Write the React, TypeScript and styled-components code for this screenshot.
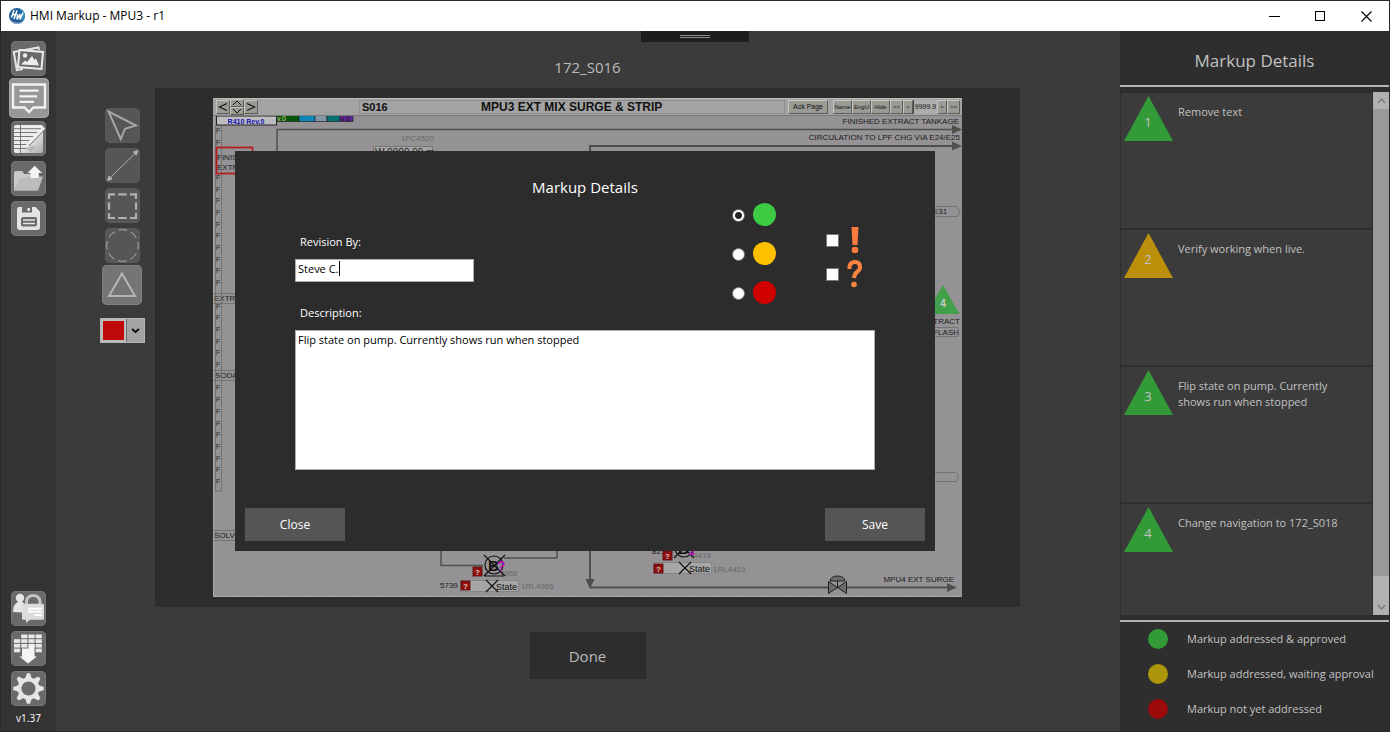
import React, { useState } from "react";
import styled, { createGlobalStyle, css } from "styled-components";

const Global = createGlobalStyle`
  * { box-sizing: border-box; }
  body { margin: 0; background: #2b2b2b; }
  body, button, input, textarea { font-family: "Open Sans", "Noto Sans", sans-serif; font-size: 11px; }
  button { border: 0; padding: 0; cursor: pointer; }
  h1, h2, p, ul { margin: 0; padding: 0; font-weight: 400; }
`;

const Window = styled.div`
  display: grid;
  grid-template-rows: 30px minmax(0, 1fr);
  height: 100vh;
  min-height: 700px;
  border: 1px solid #2b282c;
  background: #3b3b3b;
`;

const TitleBar = styled.header`
  display: flex;
  align-items: center;
  gap: 5px;
  padding-left: 8px;
  background: #fff;
  color: #000;
`;

const WindowTitle = styled.h1`
  flex: 1;
  font-size: 12px;
  line-height: 16px;
`;

const WindowButtons = styled.div`
  display: flex;
`;

const WindowButton = styled.button`
  display: grid;
  place-items: center;
  width: 46px;
  height: 30px;
  background: transparent;
`;

const Workspace = styled.div`
  display: grid;
  grid-template-columns: 55px minmax(0, 1fr) 269px;
  min-height: 0;
`;

const Sidebar = styled.nav`
  display: flex;
  flex-direction: column;
  align-items: center;
  padding: 7px 0 5px;
  background: #333;
`;

const Spacer = styled.div`
  flex: 1;
`;

const Version = styled.p`
  color: #fff;
  font-size: 10px;
  line-height: 16px;
  padding-top: 2px;
`;

const IconCell = styled.div`
  display: grid;
  place-items: center;
  width: 40px;
  height: 40px;
`;

const IconButton = styled.button<{ $active?: boolean; $tool?: boolean }>`
  display: grid;
  place-items: center;
  width: ${(p) => (p.$active ? 40 : 35)}px;
  height: ${(p) => (p.$active ? 40 : 35)}px;
  border-radius: 5px;
  background: ${(p) => (p.$tool ? "#565656" : "#6a6a6a")};
  box-shadow: inset 0 0 0 1px ${(p) => (p.$tool ? "#5a5a5a" : "#757575")};
  ${(p) =>
    p.$active &&
    css`
      background: ${p.$tool ? "#747474" : "#979797"};
      box-shadow: inset 0 0 0 1px ${p.$tool ? "#808080" : "#a6a6a6"};
    `}
  svg { display: block; }
`;

const Main = styled.main`
  position: relative;
  display: grid;
  grid-template-columns: 99px minmax(0, 1fr) 100px;
`;

const Tools = styled.div`
  display: flex;
  flex-direction: column;
  align-items: center;
  padding: 74px 0 0 33px;
`;

const ColourPicker = styled.button`
  display: flex;
  width: 45px;
  height: 25px;
  margin-top: 13px;
  border: 1px solid #b5b5b5;
  background: #a3a3a3;
`;

const Swatch = styled.span`
  width: 25px;
  height: 23px;
  border: 2px solid #bdbdbd;
  background: #bf0808;
`;

const SwatchArrow = styled.span`
  display: grid;
  place-items: center;
  flex: 1;
  height: 23px;
  border-left: 1px solid #6c6c6c;
`;

const Stage = styled.section`
  display: flex;
  flex-direction: column;
  align-items: center;
  padding-bottom: 52px;
`;

const StageTitle = styled.h2`
  padding: 26px 0 10px;
  color: #bababa;
  font-size: 15px;
  line-height: 21px;
`;

const Canvas = styled.div`
  display: flex;
  justify-content: center;
  align-self: stretch;
  flex: 1;
  min-height: 0;
  padding: 10px;
  background: #2d2d2d;
`;

const DoneButton = styled.button`
  width: 116px;
  height: 47px;
  margin-top: 25px;
  background: #2d2d2d;
  color: #bababa;
  font-size: 15px;
`;

const Screen = styled.div`
  display: flex;
  flex-direction: column;
  width: 100%;
  max-width: 749px;
  background: #949294;
`;

const ScreenBar = styled.div`
  display: flex;
  align-items: center;
  height: 18px;
  padding: 0 2px 0 3px;
  border-top: 1px solid #bbb;
  border-bottom: 1px solid #7a7a7a;
  background: #a3a3a3;
  color: #111;
  font-family: "Liberation Sans", sans-serif;
`;

const ScreenHeading = styled.div`
  display: flex;
  flex: 1;
  align-items: center;
  height: 14px;
  margin: 0 3px 0 101px;
  padding-left: 2px;
  border: 1px solid #8f8f8f;
  font-size: 12px;
  font-weight: 700;
  line-height: 12px;
  white-space: nowrap;
`;

const ScreenCode = styled.span`
  width: 119px;
  font-size: 11px;
`;

const Bevel = styled.button<{ $w: number }>`
  flex: none;
  width: ${(p) => p.$w}px;
  height: 14px;
  border: 1px solid;
  border-color: #c4c4c0 #5c5c58 #5c5c58 #c4c4c0;
  background: #9b9b95;
  color: #111;
  font-family: "Liberation Sans", sans-serif;
  font-size: ${(p) => (p.$w > 20 ? 7 : 6)}px;
  line-height: 12px;
  white-space: nowrap;
  svg { display: block; margin: 0 auto; }
`;

const NavPair = styled.div`
  display: flex;
  flex-direction: column;
  ${Bevel} { height: 8px; }
`;

const BarGroup = styled.div`
  display: flex;
  margin-left: 5px;
`;

const Reading = styled.output`
  flex: none;
  width: 24px;
  height: 14px;
  border-left: 1px solid #444;
  background: #adadad;
  font-size: 7px;
  line-height: 14px;
  text-align: center;
`;

const Schematic = styled.svg`
  display: block;
  width: 100%;
  flex: 1;
  min-height: 0;
  font-family: "Liberation Sans", sans-serif;
  font-size: 8px;
`;

const DialogLayer = styled.div`
  position: absolute;
  inset: 0 6px 60px 0;
  display: grid;
  place-items: center;
`;

const Dialog = styled.form`
  display: flex;
  flex-direction: column;
  width: 700px;
  height: 400px;
  padding: 26px 10px 10px;
  background: #2c2c2c;
  color: #fff;
`;

const DialogTitle = styled.h2`
  font-size: 15px;
  line-height: 20px;
  text-align: center;
`;

const DialogBody = styled.div`
  flex: 1;
  padding: 6px 50px 0;
`;

const TopRow = styled.div`
  display: flex;
  height: 102px;
`;

const Field = styled.div`
  display: flex;
  flex-direction: column;
  gap: 9px;
  flex: 1;
`;

const AuthorField = styled(Field)`
  padding-top: 31px;
`;

const FieldLabel = styled.label`
  padding-left: 5px;
  line-height: 16px;
`;

const InputWrap = styled.div`
  position: relative;
  width: 179px;
`;

const boxed = css`
  display: block;
  width: 100%;
  margin: 0;
  border: 1px solid #abadb3;
  border-radius: 0;
  background: #fff;
  color: #000;
  outline: 0;
  line-height: 16px;
`;

const TextInput = styled.input`
  ${boxed}
  height: 23px;
  padding: 0 2px 4px;
  caret-color: transparent;
`;

const Caret = styled.span`
  position: absolute;
  left: 44px;
  top: 2px;
  width: 1px;
  height: 15px;
  background: #000;
`;

const TextArea = styled.textarea`
  ${boxed}
  height: 140px;
  padding: 1px 2px;
  resize: none;
`;

const StatusGroup = styled.div`
  display: flex;
  flex-direction: column;
  gap: 16px;
  margin-right: 50px;
`;

const Choice = styled.label`
  display: flex;
  align-items: center;
  gap: 8px;
`;

const Radio = styled.input`
  appearance: none;
  width: 13px;
  height: 13px;
  margin: 1px 0 0;
  border: 1px solid #777;
  border-radius: 50%;
  background: #fff;
  &:checked { background: radial-gradient(circle, #222 0 3px, #fff 4px); }
`;

const Dot = styled.span<{ $size: number; $colour: string }>`
  width: ${(p) => p.$size}px;
  height: ${(p) => p.$size}px;
  flex: none;
  border-radius: 50%;
  background: ${(p) => p.$colour};
`;

const FlagGroup = styled.div`
  display: flex;
  flex-direction: column;
  gap: 6px;
  padding: 23px 12px 0 0;
`;

const Tick = styled.input`
  appearance: none;
  width: 13px;
  height: 13px;
  margin: 0;
  border: 1px solid #777;
  background: #fff;
  &:checked { background: #333; }
`;

const Footer = styled.div`
  display: flex;
  justify-content: space-between;
`;

const DialogButton = styled.button`
  width: 100px;
  height: 33px;
  background: #555;
  color: #fff;
  font-size: 12px;
`;

const Details = styled.aside`
  display: flex;
  flex-direction: column;
  min-height: 0;
  background: #2e2e2e;
  color: #c2c2c2;
`;

const DetailsTitle = styled.h2`
  height: 56px;
  padding-top: 2px;
  border-bottom: 2px solid #b3b3b3;
  font-size: 17px;
  line-height: 56px;
  text-align: center;
`;

const ListArea = styled.div`
  display: flex;
  flex: 1;
  min-height: 0;
  margin: 5px 0;
`;

const List = styled.ul`
  flex: 1;
  overflow: hidden;
  padding: 1px 1px 0;
  list-style: none;
`;

const Item = styled.li`
  display: flex;
  gap: 5px;
  height: 135px;
  margin-bottom: 2px;
  padding: 3px;
  background: #3b3b3b;
`;

const ItemText = styled.p`
  padding-top: 8px;
  line-height: 16px;
  max-width: 172px;
`;

const Badge = styled.svg`
  flex: none;
  font-size: 13px;
`;

const ScrollBar = styled.div`
  display: flex;
  flex-direction: column;
  justify-content: space-between;
  width: 16px;
  background: #b1b1b1;
`;

const ScrollButton = styled.button`
  display: grid;
  place-items: center;
  height: 17px;
  background: #b1b1b1;
`;

const Thumb = styled.div`
  flex: 0 1 467px;
  margin-bottom: auto;
  background: #999;
`;

const Legend = styled.ul`
  display: flex;
  flex-direction: column;
  gap: 15px;
  padding: 7px 0 12px 28px;
  border-top: 2px solid #b3b3b3;
  list-style: none;
`;

const LegendRow = styled.li`
  display: flex;
  align-items: center;
  gap: 19px;
  height: 20px;
  line-height: 16px;
  white-space: nowrap;
`;

const TabHandle = styled.div`
  position: absolute;
  top: 0;
  left: calc(50% + 53px);
  display: grid;
  place-items: center;
  width: 108px;
  height: 11px;
  background: #1d1d1d;
`;

const Grip = styled.span`
  width: 30px;
  height: 3px;
  border: solid #8a8a8a;
  border-width: 1px 0;
`;

const Logo = () => (
  <svg width="16" height="16" viewBox="0 0 16 16" fill="none" aria-hidden="true">
    <circle cx="8" cy="8" r="8" fill="#1f5c96" />
    <path d="M9 0a8 8 0 0 1 6.500 10L12 14l2-9z" fill="#2d93c4" />
    <path d="M1 11q5 6 12 2.500l-1 1.300Q7 17.500 2.500 13.500z" fill="#a9b6d2" />
    <path d="M5 2L2.500 9.500M8 2.500L5 11M3.800 7q2-1 3.200.5M8.500 6L8 11.500 11 6v5.500L14 4.500" stroke="#fff" strokeWidth="1.500" />
  </svg>
);

const Svg = ({ size = 35, children }: { size?: number; children: React.ReactNode }) => (
  <svg width={size} height={size} viewBox={`0 0 ${size} ${size}`} fill="none" aria-hidden="true">{children}</svg>
);

const PhotosIcon = () => (
  <Svg>
    <path d="M28 9l-.5-2.500L2.800 11l3 18 6-1" stroke="#e6e6e6" strokeWidth="2" />
    <path d="M8.500 9l23.500 2-1.500 17-23.500-2z" fill="#6a6a6a" stroke="#ececec" strokeWidth="2" />
    <circle cx="14" cy="14.500" r="2.200" fill="#ececec" />
    <path d="M10 23.500l4-4 2 1.500 5-6 2.500 4 1.500-1.500 3 7z" fill="#ececec" />
  </Svg>
);
const CommentIcon = () => (
  <Svg size={40}>
    <path d="M4 6.500h32v23H24.500L20 34l-4.500-4.500H4z" stroke="#f2f2f2" strokeWidth="2.400" />
    <path d="M10.500 12.700h19M10.500 18.300h17.500M10.500 23.800h14.500" stroke="#f2f2f2" strokeWidth="2.200" />
  </Svg>
);
const NotesIcon = () => (
  <Svg>
    <defs>
      <linearGradient id="paper" x1="0" y1="0" x2="1" y2="1">
        <stop offset=".5" stopColor="#ececec" /><stop offset="1" stopColor="#aaa" />
      </linearGradient>
    </defs>
    <rect x="3" y="4" width="29" height="28" rx="2" fill="url(#paper)" />
    <path d="M3 7.700h29M3 11.500h27M3 15.500h24M3 19.500h20M3 23.500h16M3 27.500h12M9.500 4v28" stroke="#777" strokeWidth="1" />
    <path d="M17 24l15-15.500" stroke="#888" strokeWidth="3.600" />
    <path d="M16.500 23.500L33 6.500" stroke="#f1f1f1" strokeWidth="3" />
    <path d="M14 26.500l1.500-4 2.500 2.500z" fill="#f1f1f1" />
    <path d="M14 27l6 4 5-6" fill="#999" opacity=".5" />
  </Svg>
);
const FolderIcon = () => (
  <Svg>
    <path d="M3 29.500V12q0-2 2-2h6l2.500 3H28v4H11z" fill="#c9c9c9" />
    <path d="M3 29.700L9.500 17H16l2.500-1.500H32L27 29.700z" fill="#bcbcbc" />
    <path d="M23.700 4.700L31 12h-3.500v5h-8v-5h-3z" fill="#f4f4f4" />
  </Svg>
);
const SaveIcon = () => (
  <Svg>
    <path d="M8 6h3v5.500h10V6h3.500L29 10.500V26q0 3-3 3H9q-3 0-3-3V8q0-2 2-2z" fill="#e4e4e4" />
    <path d="M16.500 7h2.500v3h-2.500z" fill="#e4e4e4" />
    <rect x="10" y="16" width="16" height="9.500" rx="2" fill="#6a6a6a" />
    <path d="M12 19h12M12 22.500h12" stroke="#e4e4e4" strokeWidth="1.500" />
  </Svg>
);
const UserLockIcon = () => (
  <Svg>
    <circle cx="9" cy="7" r="4.200" fill="#e6e6e6" />
    <path d="M2 21q0-8 5-10h4q3 1 3 3l-3 2v5.500z" fill="#e6e6e6" />
    <path d="M15.500 14V10q1-5.500 6.700-5.500T29 10v4" stroke="#c4c4c4" strokeWidth="3" />
    <path d="M12.500 12.700h19q1.500 0 1.500 1.500v13q0 1.500-1.500 1.500H19L15 32v-3.300h-2.500q-1.500 0-1.500-1.500v-13q0-1.500 1.500-1.500z" fill="#dcdcdc" />
    <path d="M17 17.700h14M17 20.700h14M23 24.200h8" stroke="#fff" strokeWidth="1.800" />
  </Svg>
);
const gridCells = [[1, 0], [2, 0], [3, 0], [0, 1], [1, 1], [2, 1], [3, 1], [0, 2], [1, 2], [2, 2], [3, 2], [0, 3], [3, 3]];
const GridArrowIcon = () => (
  <Svg>
    {gridCells.map(([c, r]) => (
      <rect key={`${c}-${r}`} x={3 + c * 7.2} y={3.5 + r * 4.7} width="6.200" height="3.700" fill="#e8e8e8" />
    ))}
    <path d="M11 17.500h6.500l.5-4h5.500v12H26l-9 7-8.500-7H11z" fill="#f4f4f4" />
  </Svg>
);
const GearIcon = () => (
  <Svg>
    {[0, 45, 90, 135, 180, 225, 270, 315].map((a) => (
      <path key={a} d="M14 8l2-5.800h3L21 8z" fill="#e6e6e6" transform={`rotate(${a} 17.500 17.500)`} />
    ))}
    <circle cx="17.500" cy="17.500" r="9" stroke="#e6e6e6" strokeWidth="3.800" />
  </Svg>
);

const CursorIcon = () => (
  <Svg><path d="M3.500 3.500L31 17.500l-11 3.200-4.200 10.500z" stroke="#a5a5a5" strokeWidth="2" /></Svg>
);
const LineIcon = () => (
  <Svg>
    <path d="M4.500 30.500L31 4.500" stroke="#b0b0b0" />
    <path d="M2.500 32.500l1.500-4.500 3.200 3zM33 2.500l-4.700 1.500 3 3.200z" fill="#b0b0b0" stroke="#b0b0b0" />
  </Svg>
);
const DashedBoxIcon = () => (
  <Svg>
    <path d="M4 11V6.300h6M13.300 6.300h8.400M25 6.300h6V11M31 14.300v7.400M31 25v5h-6M21.700 30h-8.400M10 30H4v-5M4 21.700v-7.400" stroke="#b0b0b0" strokeWidth="2.200" />
  </Svg>
);
const DashedCircleIcon = () => (
  <Svg><circle cx="17.500" cy="17.500" r="15.800" stroke="#b0b0b0" strokeDasharray="8.400 4" strokeDashoffset="4.200" /></Svg>
);
const TriangleIcon = () => (
  <Svg size={40}><path d="M20 8.500L33 31H7z" stroke="#b5b5b5" strokeWidth="2" /></Svg>
);

const TriangleBadge = ({ n, colour }: { n: number; colour: string }) => (
  <Badge width="49" height="45" viewBox="0 0 49 45">
    <path d="M24.500 0L49 45H0z" fill={colour} />
    <text x="24" y="31" textAnchor="middle" fill="#c2c2c2">{n}</text>
  </Badge>
);

const navItems = [
  { label: "Graphics", icon: <PhotosIcon /> },
  { label: "Markups", icon: <CommentIcon />, active: true },
  { label: "Notes", icon: <NotesIcon /> },
  { label: "Open", icon: <FolderIcon /> },
  { label: "Save project", icon: <SaveIcon /> },
];
const adminItems = [
  { label: "Permissions", icon: <UserLockIcon /> },
  { label: "Export", icon: <GridArrowIcon /> },
  { label: "Settings", icon: <GearIcon /> },
];
const toolItems = [
  { label: "Arrow", icon: <CursorIcon /> },
  { label: "Line", icon: <LineIcon /> },
  { label: "Rectangle", icon: <DashedBoxIcon /> },
  { label: "Ellipse", icon: <DashedCircleIcon /> },
  { label: "Triangle", icon: <TriangleIcon />, active: true },
];
const markups = [
  { n: 1, colour: "#339a38", text: "Remove text" },
  { n: 2, colour: "#bd900b", text: "Verify working when live." },
  { n: 3, colour: "#339a38", text: "Flip state on pump. Currently shows run when stopped" },
  { n: 4, colour: "#339a38", text: "Change navigation to 172_S018" },
];
const legend = [
  { colour: "#339a38", text: "Markup addressed & approved" },
  { colour: "#ac960b", text: "Markup addressed, waiting approval" },
  { colour: "#9d0a0a", text: "Markup not yet addressed" },
];
const statuses = [
  { name: "Approved", colour: "#3ecb44" },
  { name: "Waiting", colour: "#ffc000" },
  { name: "Open", colour: "#d00000" },
];

type ButtonSpec = { label: string; icon: React.ReactNode; active?: boolean };
const IconList = ({ items, tool }: { items: ButtonSpec[]; tool?: boolean }) => (
  <>
    {items.map((i) => (
      <IconCell key={i.label}>
        <IconButton type="button" aria-label={i.label} $active={i.active} $tool={tool}>{i.icon}</IconButton>
      </IconCell>
    ))}
  </>
);

const Alarm = ({ x, y }: { x: number; y: number }) => (
  <g>
    <rect x={x} y={y} width="9" height="9" fill="#8e0f0f" stroke="#5a0808" strokeWidth=".8" />
    <text x={x + 4.5} y={y + 7.5} textAnchor="middle" fill="#e0c0c0" fontWeight="700">?</text>
  </g>
);

// Flow direction letters down the left pipe, leaving room for the stream labels.
const labelRows = [160, 170, 301, 378];
const flowMarks = Array.from({ length: 31 }, (_, i) => Math.round(133 + i * 11.7)).filter((y) =>
  labelRows.every((row) => Math.abs(row - y) > 6)
);

const ProcessDrawing = () => (
  <Schematic viewBox="213 116 749 481" preserveAspectRatio="none">
    <rect x="213" y="116" width="749" height="481" fill="#949294" />
    <path d="M213.500 116v481" stroke="#aaa" />
    <path d="M214 596.500h748" stroke="#bbb" strokeDasharray="2 1" />
    <rect x="216.500" y="116" width="60" height="9" fill="#bdbdc0" stroke="#222" strokeWidth="1" />
    <text x="246" y="124" textAnchor="middle" fill="#1515b5" fontSize="7" fontWeight="700">R410 Rev.0</text>
    <g stroke="#222" strokeWidth=".7">
      <rect x="277" y="115.500" width="22" height="6" fill="#075507" />
      <rect x="299" y="115.500" width="16" height="6" fill="#0c87bb" />
      <rect x="315" y="115.500" width="12" height="6" fill="#8497ab" />
      <rect x="327" y="115.500" width="13" height="6" fill="#077070" />
      <rect x="340" y="115.500" width="13" height="6" fill="#64269a" />
    </g>
    <text x="277" y="121" fill="#d5d5a0" fontSize="7">v.0</text>
    <text x="341" y="121" fill="#111" fontSize="7">v.0</text>
    <g stroke="#4c514c" strokeWidth="1.500" fill="none">
      <path d="M277 160v-30.500h676" />
      <path d="M590 583v-437h363" strokeWidth="2" />
      <path d="M441 545v20.500h42M504 558h53v-14" />
      <path d="M590 587.500h360" strokeWidth="2" />
    </g>
    <path d="M952 125l10 4.500-10 4.500zM952 141.500l10 4.500-10 4.500zM947 583l10 4.500-10 4.500zM585.500 579h9l-4.500 10z" fill="#4c514c" />
    <g fill="#1c1c1c">
      <g textAnchor="end">
        <text x="959" y="124">FINISHED EXTRACT TANKAGE</text>
        <text x="960" y="140">CIRCULATION TO LPF CHG VIA E24/E25</text>
        <text x="954" y="582">MPU4 EXT SURGE</text>
        <text x="960" y="324">EXTRACT</text>
        <text x="959" y="335">FLASH</text>
      </g>
      <text x="440" y="588">5739</text>
      <text x="652" y="554">821</text>
      <text x="933" y="214">E31</text>
      <text x="217" y="160">FINISHED</text>
      <text x="217" y="170">EXTRACT</text>
      <text x="214" y="301">EXTRACT</text>
      <text x="215" y="378">SODA</text>
      <text x="214" y="538">SOLVENT</text>
    </g>
    <g fill="#686868">
      <text x="401" y="141">1FC4520</text>
      <text x="521" y="589">1RL4966</text>
      <text x="500" y="576">4966</text>
      <text x="693" y="558">4419</text>
      <text x="713" y="572">1RL4419</text>
    </g>
    <rect x="373.500" y="146.500" width="59" height="14" fill="#a4a4a4" stroke="#777" />
    <text x="375" y="156" fill="#222" fontSize="10">W 9999.99 m</text>
    <g fill="none" stroke="#6c6c6c" strokeWidth=".8">
      <path d="M215.500 126v365h6V126M213 293.500h25M213 303.500h25M213 370.500h25M213 380.500h25M213 530.500h25M213 540.500h25" />
      <path d="M930 206.500h27l3 5-3 5h-27M930 472.500h26q2 0 2 4.500t-2 4.500h-26M930 327.500h28v9h-28" />
    </g>
    <g fill="#222" fontSize="7">
      {flowMarks.map((y) => <text key={y} x="216" y={y}>F</text>)}
    </g>
    <rect x="216.500" y="147.500" width="36" height="26" fill="none" stroke="#b31d1d" strokeWidth="1.800" />
    <path d="M943 285l16.500 29H926z" fill="#41a049" />
    <text x="943" y="307" textAnchor="middle" fill="#ccc" fontSize="10" fontWeight="700">4</text>
    <Alarm x={473} y={567} />
    <Alarm x={663} y={551} />
    <rect x="460.500" y="580.500" width="58" height="11" fill="#a6a6a6" stroke="#858585" />
    <rect x="653.500" y="562.500" width="58" height="11" fill="#a6a6a6" stroke="#858585" />
    <Alarm x={461} y={581} />
    <Alarm x={654} y={564} />
    <g fill="none" stroke="#111" strokeWidth="1.200">
      <circle cx="494" cy="565" r="9" /><path d="M484 555l21 21M505 555l-21 21M484 576h20" />
      <circle cx="684" cy="548" r="9" /><path d="M674 538l20 20M694 538l-20 20" />
      <path d="M486 580l12 12M498 580l-12 12M679 562l12 12M691 562l-12 12" />
    </g>
    <text x="488" y="571" fontSize="15" fontWeight="700" fill="#111">B</text>
    <text x="678" y="554" fontSize="15" fontWeight="700" fill="#111">B</text>
    <text x="497" y="571" fontSize="14" fontWeight="700" fill="#b515b5">?</text>
    <path d="M689 554h4v-4" stroke="#b515b5" strokeWidth="2" fill="none" />
    <text x="496" y="590" fontSize="9" fill="#111">State</text>
    <text x="689" y="572" fontSize="9" fill="#111">State</text>
    <g fill="#6b6b6f" stroke="#222">
      <path d="M830 581q1-5 7.500-5t7.500 5z" /><path d="M828.500 581.500v12l9-6 9 6v-12l-9 6zM837.500 581v7" />
    </g>
  </Schematic>
);

const Chevron = ({ d }: { d: string }) => (
  <svg width="10" height="10" viewBox="0 0 10 10" fill="none"><path d={d} stroke="#111" strokeWidth="1.200" /></svg>
);

export default function App() {
  const [author, setAuthor] = useState("Steve C.");
  const [status, setStatus] = useState("Approved");
  const [description, setDescription] = useState("Flip state on pump. Currently shows run when stopped");

  return (
    <Window>
      <Global />
      <TitleBar>
        <Logo />
        <WindowTitle>HMI Markup - MPU3 - r1</WindowTitle>
        <WindowButtons>
          <WindowButton aria-label="Minimize"><svg width="11" height="11"><path d="M0 5.500h11" stroke="#000" /></svg></WindowButton>
          <WindowButton aria-label="Maximize"><svg width="11" height="11"><rect x=".5" y=".5" width="9" height="9" fill="none" stroke="#000" /></svg></WindowButton>
          <WindowButton aria-label="Close window"><svg width="11" height="11"><path d="M.5.5l10 10M10.500.5l-10 10" stroke="#000" strokeWidth="1.100" /></svg></WindowButton>
        </WindowButtons>
      </TitleBar>
      <Workspace>
        <Sidebar>
          <IconList items={navItems} />
          <Spacer />
          <IconList items={adminItems} />
          <Version>v1.37</Version>
        </Sidebar>
        <Main>
          <Tools>
            <IconList items={toolItems} tool />
            <ColourPicker type="button" aria-label="Markup colour">
              <Swatch />
              <SwatchArrow><svg width="9" height="6"><path d="M1 1l3.500 3L8 1" stroke="#111" strokeWidth="2" fill="none" /></svg></SwatchArrow>
            </ColourPicker>
          </Tools>
          <Stage>
            <StageTitle>172_S016</StageTitle>
            <Canvas>
              <Screen>
                <ScreenBar>
                  <Bevel $w={14} aria-label="Previous"><Chevron d="M9 1.500L1.500 5 9 8.500" /></Bevel>
                  <NavPair>
                    <Bevel $w={14} aria-label="Up"><svg width="10" height="6"><path d="M1 5l4-4 4 4" stroke="#111" fill="none" /></svg></Bevel>
                    <Bevel $w={14} aria-label="Down"><svg width="10" height="6"><path d="M1 1l4 4 4-4" stroke="#111" fill="none" /></svg></Bevel>
                  </NavPair>
                  <Bevel $w={14} aria-label="Next"><Chevron d="M1 1.500L8.500 5 1 8.500" /></Bevel>
                  <ScreenHeading><ScreenCode>S016</ScreenCode>MPU3 EXT MIX SURGE &amp; STRIP</ScreenHeading>
                  <Bevel $w={40}>Ack Page</Bevel>
                  <BarGroup>
                    <Bevel $w={19}>Name</Bevel>
                    <Bevel $w={19}>EngU</Bevel>
                    <Bevel $w={19}>Hide</Bevel>
                    <Bevel $w={13}>&lt;&lt;</Bevel>
                    <Bevel $w={10}>&lt;</Bevel>
                    <Reading>9999.9</Reading>
                    <Bevel $w={10}>&gt;</Bevel>
                    <Bevel $w={13}>&gt;&gt;</Bevel>
                  </BarGroup>
                </ScreenBar>
                <ProcessDrawing />
              </Screen>
            </Canvas>
            <DoneButton type="button">Done</DoneButton>
          </Stage>
          <TabHandle><Grip /></TabHandle>
          <DialogLayer>
            <Dialog onSubmit={(e) => e.preventDefault()}>
              <DialogTitle>Markup Details</DialogTitle>
              <DialogBody>
                <TopRow>
                  <AuthorField>
                    <FieldLabel htmlFor="author">Revision By:</FieldLabel>
                    <InputWrap>
                      <TextInput id="author" value={author} onChange={(e) => setAuthor(e.target.value)} />
                      <Caret />
                    </InputWrap>
                  </AuthorField>
                  <StatusGroup role="radiogroup" aria-label="Status">
                    {statuses.map((s) => (
                      <Choice key={s.name}>
                        <Radio type="radio" name="status" aria-label={s.name} checked={status === s.name} onChange={() => setStatus(s.name)} />
                        <Dot $size={23} $colour={s.colour} />
                      </Choice>
                    ))}
                  </StatusGroup>
                  <FlagGroup>
                    <Choice>
                      <Tick type="checkbox" aria-label="Important" />
                      <svg width="16" height="28" viewBox="0 0 16 28"><path d="M4.500 1h7l-1 18h-5z" fill="#ff7a3d" /><circle cx="8" cy="24" r="3.300" fill="#ff7a3d" /></svg>
                    </Choice>
                    <Choice>
                      <Tick type="checkbox" aria-label="Question" />
                      <svg width="16" height="28" viewBox="0 0 16 28"><path d="M2.500 9V7q.5-5 5.500-5t5 5q0 3-3 5-2.500 1.700-3 6" fill="none" stroke="#ff8440" strokeWidth="4" /><circle cx="7" cy="24.500" r="2.800" fill="#ff8440" /></svg>
                    </Choice>
                  </FlagGroup>
                </TopRow>
                <Field>
                  <FieldLabel htmlFor="description">Description:</FieldLabel>
                  <TextArea id="description" value={description} onChange={(e) => setDescription(e.target.value)} />
                </Field>
              </DialogBody>
              <Footer>
                <DialogButton type="button">Close</DialogButton>
                <DialogButton type="submit">Save</DialogButton>
              </Footer>
            </Dialog>
          </DialogLayer>
        </Main>
        <Details>
          <DetailsTitle>Markup Details</DetailsTitle>
          <ListArea>
            <List>
              {markups.map((m) => (
                <Item key={m.n}><TriangleBadge n={m.n} colour={m.colour} /><ItemText>{m.text}</ItemText></Item>
              ))}
            </List>
            <ScrollBar>
              <ScrollButton aria-label="Scroll up"><svg width="9" height="6"><path d="M1 5l3.500-4L8 5" stroke="#777" strokeWidth="1.300" fill="none" /></svg></ScrollButton>
              <Thumb />
              <ScrollButton aria-label="Scroll down"><svg width="9" height="6"><path d="M1 1l3.500 4L8 1" stroke="#777" strokeWidth="1.300" fill="none" /></svg></ScrollButton>
            </ScrollBar>
          </ListArea>
          <Legend>
            {legend.map((l) => (
              <LegendRow key={l.text}><Dot $size={20} $colour={l.colour} />{l.text}</LegendRow>
            ))}
          </Legend>
        </Details>
      </Workspace>
    </Window>
  );
}
